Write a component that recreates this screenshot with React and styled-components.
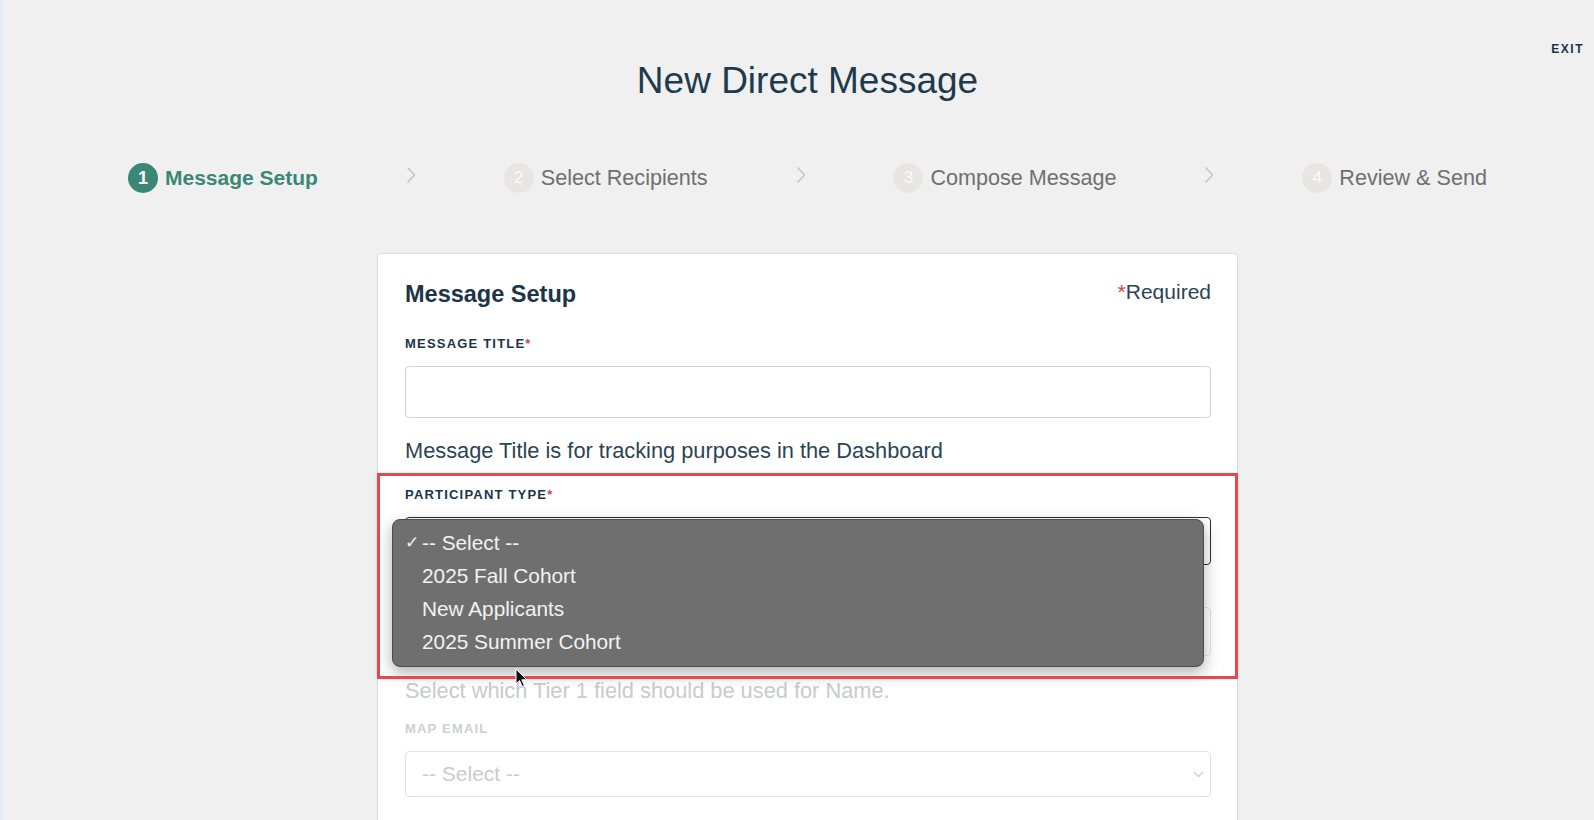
import React from 'react';
import styled, { createGlobalStyle } from 'styled-components';

const GlobalStyle = createGlobalStyle`
  html, body {
    margin: 0;
    padding: 0;
    background: #f0f0f0;
  }

  body {
    font-family: "Liberation Sans", Arial, sans-serif;
    color: #1d3a4c;
    overflow: hidden;
  }

  * {
    box-sizing: border-box;
  }
`;

const Page = styled.div`
  min-height: 100vh;
  border-left: 3px solid #e4edf3;
  padding-left: 18px;
`;

const TopBar = styled.div`
  display: flex;
  justify-content: flex-end;
  padding: 42px 10px 0 0;
`;

const ExitButton = styled.button`
  background: none;
  border: 0;
  padding: 0;
  font: 700 12px/14px "Liberation Sans", Arial, sans-serif;
  letter-spacing: 1.5px;
  color: #1c3447;
  cursor: pointer;
`;

const Title = styled.h1`
  margin: 3px 0 0;
  text-align: center;
  font-size: 37px;
  line-height: 44px;
  font-weight: 400;
  color: #1e3b4e;
`;

const Steps = styled.nav`
  width: 1359px;
  margin: 60px auto 0;
  display: flex;
  align-items: center;
  justify-content: space-between;
`;

const Step = styled.div`
  display: flex;
  align-items: center;
  gap: 7px;
`;

const StepNumber = styled.span`
  width: 30px;
  height: 30px;
  border-radius: 50%;
  display: flex;
  align-items: center;
  justify-content: center;
  background: ${(p) => (p.$active ? '#3b8775' : '#e7e6e3')};
  color: ${(p) => (p.$active ? '#ffffff' : '#fbfbfb')};
  font-size: ${(p) => (p.$active ? '18px' : '17px')};
  font-weight: ${(p) => (p.$active ? 700 : 400)};
`;

const StepLabel = styled.span`
  font-size: ${(p) => (p.$active ? '21px' : '21.6px')};
  font-weight: ${(p) => (p.$active ? 700 : 400)};
  color: ${(p) => (p.$active ? '#3b8775' : '#6f6f6f')};
  line-height: 30px;
`;

const StepArrow = styled.svg`
  width: 10px;
  height: 18px;
  margin-top: -6px;
`;

const Card = styled.section`
  width: 861px;
  margin: 60px auto 0;
  background: #ffffff;
  border: 1px solid #dcdcdc;
  border-radius: 4px;
  padding: 26px 26px 60px 27px;
  box-shadow: 0 1px 2px rgba(0, 0, 0, 0.04);
`;

const CardHeader = styled.div`
  display: flex;
  justify-content: space-between;
  align-items: center;
`;

const CardTitle = styled.h2`
  margin: 0;
  font-size: 23.5px;
  line-height: 28px;
  font-weight: 700;
  color: #1c3447;
`;

const RequiredNote = styled.span`
  font-size: 21px;
  line-height: 26px;
  color: #2b4455;
  margin-top: -4px;
`;

const Star = styled.span`
  color: #d7443e;
`;

const Field = styled.div`
  display: flex;
  flex-direction: column;
  margin-top: ${(p) => p.$top || 0}px;
`;

const Label = styled.label`
  min-height: 16px;
  font-size: 13px;
  line-height: 16px;
  font-weight: 700;
  letter-spacing: 1.2px;
  text-transform: uppercase;
  color: ${(p) => (p.$muted ? '#cdd0d2' : '#1c3447')};
  margin-bottom: 14px;
`;

const TextInput = styled.input`
  width: 100%;
  height: 52px;
  border: 1px solid #d3d3d3;
  border-radius: 4px;
  font: 400 20px "Liberation Sans", Arial, sans-serif;
  padding: 0 16px;
  outline: none;
`;

const Help = styled.p`
  margin: ${(p) => p.$top || 0}px 0 0;
  font-size: 21.8px;
  line-height: 26px;
  color: ${(p) => (p.$muted ? '#c9cbcd' : '#2b4455')};
`;

const SelectBox = styled.div`
  position: relative;
  height: ${(p) => p.$height}px;
  border: 1px solid ${(p) => (p.$open ? '#2c2c2c' : '#e3e3e3')};
  border-radius: 4px;
  display: flex;
  align-items: center;
  justify-content: space-between;
  padding: 0 6px 0 16px;
  font-size: 21px;
  color: #cbcbcb;
`;

const SelectChevron = styled.svg`
  width: 11px;
  height: 7px;
  margin-left: auto;
`;

const Highlight = styled.div`
  position: relative;
  margin-top: 23px;

  &::after {
    content: '';
    position: absolute;
    top: -14px;
    left: -28px;
    right: -27px;
    bottom: -23px;
    border: 3px solid #e14a4e;
    box-shadow: 0 0 3px rgba(0, 0, 0, 0.12);
    pointer-events: none;
    z-index: 3;
  }
`;

const Menu = styled.ul`
  position: absolute;
  top: 1px;
  left: -14px;
  width: 812px;
  margin: 0;
  padding: 6px 0 8px;
  list-style: none;
  background: #6f6f6f;
  border: 1px solid #4d4d4d;
  border-radius: 8px;
  box-shadow: 0 6px 16px rgba(0, 0, 0, 0.3);
  z-index: 2;
`;

const MenuItem = styled.li`
  display: flex;
  align-items: center;
  height: 33px;
  padding-left: 12px;
  font-size: 20.8px;
  color: #f2f2f2;
`;

const Check = styled.span`
  width: 17px;
  font-size: 17px;
`;

const Pointer = styled.svg`
  position: absolute;
  left: 110px;
  top: 181px;
  width: 13px;
  height: 20px;
  z-index: 4;
`;

const steps = ['Message Setup', 'Select Recipients', 'Compose Message', 'Review & Send'];
const participantTypes = ['-- Select --', '2025 Fall Cohort', 'New Applicants', '2025 Summer Cohort'];

const Arrow = () => (
  <StepArrow viewBox="0 0 10 18">
    <polyline points="1.5,1.5 8.5,9 1.5,16.5" fill="none" stroke="#c3c3c3" strokeWidth="1.4" />
  </StepArrow>
);

const Chevron = ({ color }) => (
  <SelectChevron viewBox="0 0 11 7">
    <polyline points="1,1 5.5,5.5 10,1" fill="none" stroke={color} strokeWidth="1.4" />
  </SelectChevron>
);

const App = () => {
  return (
    <Page>
      <GlobalStyle />
      <TopBar>
        <ExitButton>EXIT</ExitButton>
      </TopBar>
      <Title>New Direct Message</Title>

      <Steps>
        {steps.map((label, i) => (
          <React.Fragment key={label}>
            {i > 0 && <Arrow />}
            <Step>
              <StepNumber $active={i === 0}>{i + 1}</StepNumber>
              <StepLabel $active={i === 0}>{label}</StepLabel>
            </Step>
          </React.Fragment>
        ))}
      </Steps>

      <Card>
        <CardHeader>
          <CardTitle>Message Setup</CardTitle>
          <RequiredNote>
            <Star>*</Star>Required
          </RequiredNote>
        </CardHeader>

        <Field $top={28}>
          <Label>
            Message Title<Star>*</Star>
          </Label>
          <TextInput type="text" />
          <Help $top={20}>Message Title is for tracking purposes in the Dashboard</Help>
        </Field>

        <Highlight>
          <Field>
            <Label>
              Participant Type<Star>*</Star>
            </Label>
            {/* open native list: the menu covers the closed value */}
            <SelectBox $height={48} $open>
              <Chevron color="#2c3e50" />
              <Menu>
                {participantTypes.map((option, i) => (
                  <MenuItem key={option}>
                    <Check>{i === 0 ? '✓' : ''}</Check>
                    {option}
                  </MenuItem>
                ))}
              </Menu>
            </SelectBox>
          </Field>

          {/* name mapping field, its label sits under the open menu */}
          <Field $top={12}>
            <Label $muted />
            <SelectBox $height={49}>
              <Chevron color="#cfcfcf" />
            </SelectBox>
          </Field>

          <Pointer viewBox="0 0 13 20">
            <path d="M1 1 L1 16 L4.6 12.6 L7.2 18.6 L9.4 17.6 L6.9 11.8 L11.8 11.8 Z" fill="#111" stroke="#fff" strokeWidth="1" />
          </Pointer>
        </Highlight>

        <Help $top={22} $muted>
          Select which Tier 1 field should be used for Name.
        </Help>

        <Field $top={17}>
          <Label $muted>Map Email</Label>
          <SelectBox $height={46}>
            <span>-- Select --</span>
            <Chevron color="#cfcfcf" />
          </SelectBox>
        </Field>
      </Card>
    </Page>
  );
};

export default App;
